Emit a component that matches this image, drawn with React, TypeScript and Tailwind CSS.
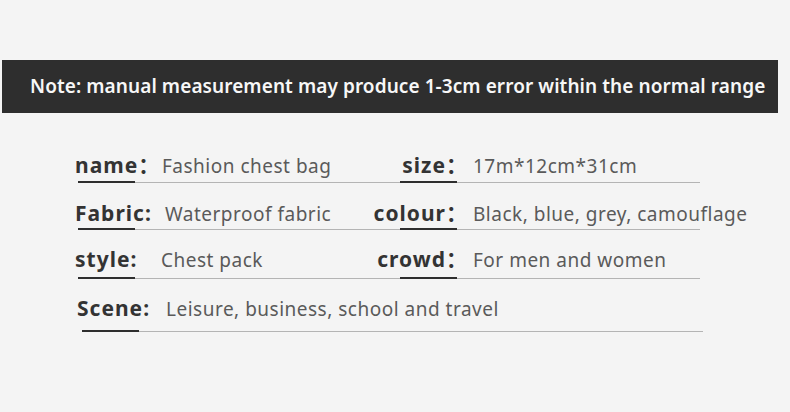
const font = { fontFamily: "'Noto Sans', 'Noto Sans CJK SC', sans-serif" }

type Row = {
  label: string
  labelW: string
  value: string
  rLabel?: string
  rValue?: string
  mt: string
  pb: string
}

const rows: Row[] = [
  { label: 'name：', labelW: 'w-[87px]', value: 'Fashion chest bag', rLabel: 'size：', rValue: '17m*12cm*31cm', mt: 'mt-[38px]', pb: 'pb-[1px]' },
  { label: 'Fabric:', labelW: 'w-[90px]', value: 'Waterproof fabric', rLabel: 'colour：', rValue: 'Black, blue, grey, camouflage', mt: 'mt-[16px]', pb: 'pb-0' },
  { label: 'style:', labelW: 'w-[86px]', value: 'Chest pack', rLabel: 'crowd：', rValue: 'For men and women', mt: 'mt-[15px]', pb: 'pb-[3px]' },
  { label: 'Scene:', labelW: 'w-[89px]', value: 'Leisure, business, school and travel', mt: 'mt-[15px]', pb: 'pb-[7px]' },
]

function InfoRow({ row, last }: { row: Row; last: boolean }) {
  return (
    <div className={`${row.mt} ${last ? 'ml-[82px] w-[621px]' : 'ml-[78px] w-[622px]'} flex flex-col`}>
      <div className={`flex items-baseline ${row.pb}`}>
        <div className={`w-[322px] shrink-0 flex items-baseline ${last ? '-ml-[5px]' : '-ml-[3px]'}`}>
          <span className={`${row.labelW} shrink-0 text-[21px] tracking-[1px] font-bold text-[#333] leading-[28px] whitespace-nowrap`}>
            {row.label}
          </span>
          <span className="text-[19px] tracking-[0.5px] text-[#5a5a5a] leading-[28px] whitespace-nowrap">{row.value}</span>
        </div>
        {row.rLabel && (
          <div className="flex items-baseline">
            <span className="w-[74px] -ml-[3px] shrink-0 text-[21px] tracking-[1px] font-bold text-[#333] leading-[28px] whitespace-nowrap flex justify-end">
              {row.rLabel}
            </span>
            <span className="ml-[5px] text-[19px] tracking-[0.5px] text-[#5a5a5a] leading-[28px] whitespace-nowrap">{row.rValue}</span>
          </div>
        )}
      </div>
      <div className="flex items-center h-[2px]">
        <div className="w-[57px] h-[2px] bg-[#2e2e2e]" />
        {row.rLabel ? (
          <>
            <div className="w-[265px] h-px bg-[#b4b4b4]" />
            <div className="w-[57px] h-[2px] bg-[#2e2e2e]" />
            <div className="flex-1 h-px bg-[#b4b4b4]" />
          </>
        ) : (
          <div className="flex-1 h-px bg-[#b4b4b4]" />
        )}
      </div>
    </div>
  )
}

export default function App() {
  return (
    <div className="w-[790px] h-[412px] bg-[#f4f4f4] overflow-hidden flex flex-col" style={font}>
      <div className="mt-[60px] ml-[2px] w-[776px] h-[53px] bg-[#2e2e2e] flex items-center pl-[28px]">
        <span className="text-[19px] tracking-[0.08px] font-semibold text-[#f7f7f7] whitespace-nowrap">
          Note: manual measurement may produce 1-3cm error within the normal range
        </span>
      </div>
      {rows.map((r, i) => (
        <InfoRow key={i} row={r} last={i === rows.length - 1} />
      ))}
    </div>
  )
}
